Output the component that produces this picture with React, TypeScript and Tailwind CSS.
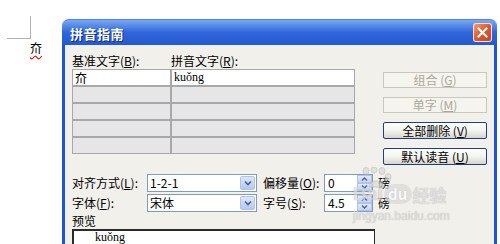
import React from "react";

const cjk = { fontFamily: '"Noto Sans CJK SC", "Noto Sans", sans-serif' };
const serif = { fontFamily: '"Liberation Serif", "Noto Sans CJK SC", serif' };

function Key({ k }: { k: string }) {
  return (
    <>
      (<span className="underline underline-offset-1">{k}</span>)
    </>
  );
}

function XpButton({ label, k, disabled }: { label: string; k: string; disabled?: boolean }) {
  return (
    <div
      className={
        disabled
          ? "h-[16px] w-[104px] flex items-center justify-center border border-[#c9c7ba] bg-[#f5f4ef] text-[#aca899] text-[12px] leading-none"
          : "h-[17px] w-[104px] flex items-center justify-center border border-[#1d3d8f] rounded-[2px] bg-gradient-to-b from-white via-[#f4f4f0] to-[#d6d5cc] text-black text-[12px] leading-none"
      }
    >
      {label}
      <Key k={k} />
    </div>
  );
}

function Combo({ value }: { value: string }) {
  return (
    <div className="h-[18px] w-[110px] flex border border-[#7f9db9] bg-white">
      <div className="flex-1 pl-[2px] text-[12px] leading-[16px]">{value}</div>
      <div className="w-[15px] m-[1px] rounded-[2px] bg-gradient-to-b from-[#dde7fb] to-[#b4c8f4] border border-[#b1c4ef] flex items-center justify-center">
        <svg width="8" height="6" viewBox="0 0 8 6">
          <path d="M1 1.5 L4 4.5 L7 1.5" stroke="#4d6185" strokeWidth="1.6" fill="none" />
        </svg>
      </div>
    </div>
  );
}

function Spin({ value }: { value: string }) {
  return (
    <div className="h-[18px] w-[49px] flex border border-[#7f9db9] bg-white">
      <div className="flex-1 pl-[3px] text-[12px] leading-[16px]">{value}</div>
      <div className="w-[15px] flex flex-col">
        <div className="flex-1 bg-gradient-to-b from-[#e2eafb] to-[#c3d4f6] border border-[#b1c4ef] flex items-center justify-center">
          <svg width="7" height="4" viewBox="0 0 7 4">
            <path d="M1 3.5 L3.5 1 L6 3.5" stroke="#4d6185" strokeWidth="1.3" fill="none" />
          </svg>
        </div>
        <div className="flex-1 bg-gradient-to-b from-[#e2eafb] to-[#c3d4f6] border border-[#b1c4ef] flex items-center justify-center">
          <svg width="7" height="4" viewBox="0 0 7 4">
            <path d="M1 0.5 L3.5 3 L6 0.5" stroke="#4d6185" strokeWidth="1.3" fill="none" />
          </svg>
        </div>
      </div>
    </div>
  );
}

export default function App() {
  const rows = [0, 1, 2, 3];
  return (
    <div className="relative w-[500px] h-[244px] overflow-hidden bg-white flex items-start text-black" style={cjk}>
      {/* document page corner + character */}
      <div className="w-[62px] shrink-0 flex flex-col">
        <div className="ml-[7px] mt-[16px] w-[24px] h-[23px] border-r border-b border-[#b4b4b4]" />
        <div className="ml-[30px] mt-[2px] text-[12px] leading-[14px] underline decoration-wavy decoration-[#e81010] underline-offset-2">
          夼
        </div>
      </div>

      {/* dialog */}
      <div className="mt-[19px] w-[435px] h-[225px] flex flex-col">
        <div className="h-[26px] shrink-0 rounded-t-[7px] bg-gradient-to-b from-[#7aa8f2] via-[#2f66da] to-[#2459d0] border-t border-[#4f85e8] flex items-center justify-between pl-[8px] pr-[5px]">
          <span className="text-white font-bold text-[13px] tracking-[0.5px] mt-[2px]" style={{ textShadow: "1px 1px 0 #0b2a8a" }}>
            拼音指南
          </span>
          <div className="w-[19px] h-[19px] rounded-[3px] border border-white/80 bg-gradient-to-br from-[#f09a6c] via-[#e0582c] to-[#c9431d] flex items-center justify-center">
            <svg width="11" height="11" viewBox="0 0 11 11">
              <path d="M1.5 1.5 L9.5 9.5 M9.5 1.5 L1.5 9.5" stroke="white" strokeWidth="2.2" strokeLinecap="square" />
            </svg>
          </div>
        </div>

        <div className="flex-1 border-x-[3px] border-[#1f55d4] bg-[#f1f0eb] pl-[7px] pt-[9px] text-[12px]">
          <div className="flex items-start h-[100px]">
            <div className="w-[283px]">
              <div className="flex h-[15px] leading-[13px]">
                <div className="w-[99px]">
                  基准文字<Key k="B" />:
                </div>
                <div>
                  拼音文字<Key k="R" />:
                </div>
              </div>
              <div className="grid grid-cols-[97px_182px] gap-[2px] p-[1px] bg-[#a8a7ab]">
                <div className="h-[15px] bg-white pl-[2px] leading-[15px]">夼</div>
                <div className="h-[15px] bg-white pl-[2px] leading-[15px] text-[12px]" style={serif}>
                  kuǒng
                </div>
                {rows.map((r) => (
                  <React.Fragment key={r}>
                    <div className="h-[15px] bg-[#e6e6e6]" />
                    <div className="h-[15px] bg-[#e6e6e6]" />
                  </React.Fragment>
                ))}
              </div>
            </div>
            <div className="ml-[28px] mt-[18px] flex flex-col gap-[9px]">
              <XpButton label="组合 " k="G" disabled />
              <XpButton label="单字 " k="M" disabled />
              <XpButton label="全部删除 " k="V" />
              <XpButton label="默认读音 " k="U" />
            </div>
          </div>

          <div className="mt-[20px] flex flex-col gap-[2px]">
            <div className="flex items-center h-[18px]">
              <div className="w-[75px]">
                对齐方式<Key k="L" />:
              </div>
              <Combo value="1-2-1" />
              <div className="ml-[6px] w-[61px]">
                偏移量<Key k="O" />:
              </div>
              <Spin value="0" />
              <div className="ml-[5px]">磅</div>
            </div>
            <div className="flex items-center h-[18px]">
              <div className="w-[75px]">
                字体<Key k="F" />:
              </div>
              <Combo value="宋体" />
              <div className="ml-[6px] w-[61px]">
                字号<Key k="S" />:
              </div>
              <Spin value="4.5" />
              <div className="ml-[5px]">磅</div>
            </div>
          </div>

          <div className="mt-[2px] h-[15px] leading-[14px]">预览</div>
          <div className="w-[303px] h-[30px] border-t-2 border-l-2 border-r border-[#2a2a2a] bg-white pl-[21px] text-[12px] leading-[13px]" style={serif}>
            kuǒng
          </div>
        </div>
      </div>

      {/* watermark */}
      <div className="absolute left-[353px] top-[167px] flex flex-col items-start pointer-events-none opacity-70">
        <svg width="36" height="22" viewBox="0 0 36 22" className="ml-[4px]">
          <g fill="#dadada" stroke="#a8a8a8" strokeWidth="0.6">
            <ellipse cx="9" cy="4" rx="3" ry="3.5" />
            <ellipse cx="17" cy="3" rx="3" ry="3" />
            <ellipse cx="25" cy="4" rx="3" ry="3.5" />
            <ellipse cx="31" cy="10" rx="3" ry="3.5" />
            <path d="M12 20 C12 12 26 12 27 20 Z" />
          </g>
        </svg>
        <div className="flex items-end gap-[1px] text-[#d9d9d9] -mt-[5px]" style={{ textShadow: "0 0 1px #9a9a9a" }}>
          <span className="text-[19px] font-bold leading-[20px]" style={{ fontFamily: "'Liberation Sans', sans-serif" }}>
            Bai
          </span>
          <span className="w-[28px] h-[20px] rounded-full bg-[#d9d9d9] text-white text-[15px] font-bold leading-[20px] text-center">
            du
          </span>
          <span className="text-[17px] font-bold leading-[19px]">经验</span>
        </div>
        <div className="text-[12px] leading-[12px] mt-[6px] text-[#d9d9d9]" style={{ fontFamily: "'Liberation Sans', sans-serif", textShadow: "0 0 1px #9a9a9a" }}>
          jingyan.baidu.com
        </div>
      </div>
    </div>
  );
}
